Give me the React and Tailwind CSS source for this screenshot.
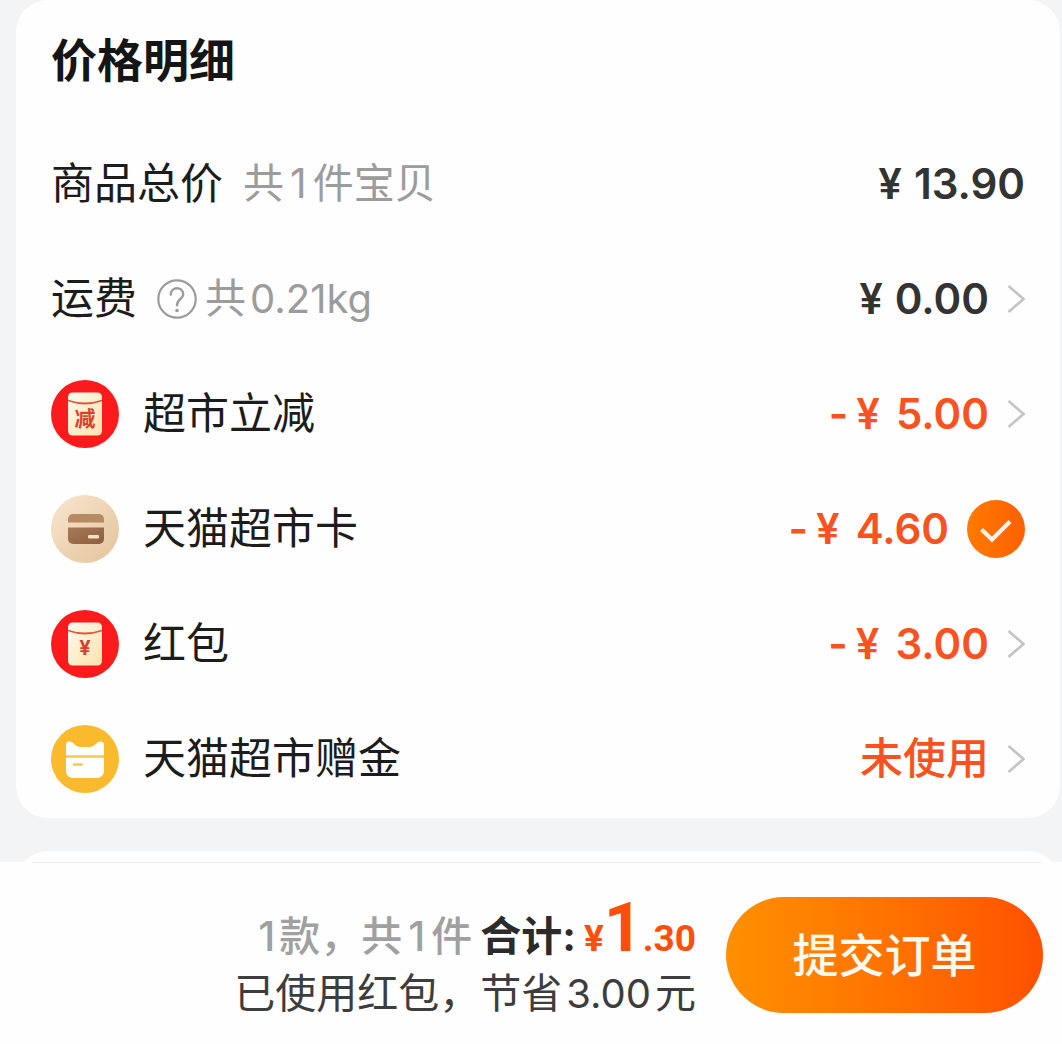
import { useState } from "react";

const EnvelopeIcon = ({ id, mark, markSize, markY }) => (
  <svg viewBox="0 0 68 68" className="size-[68px] shrink-0" aria-hidden="true">
    <defs>
      <linearGradient id={id} x1="0" y1="0" x2="1" y2="1">
        <stop offset="0" stopColor="#fffaf0" />
        <stop offset="1" stopColor="#fbe3ab" />
      </linearGradient>
    </defs>
    <circle cx="34" cy="34" r="34" fill="#fb1a1c" />
    <rect x="17" y="12.500" width="34" height="43" rx="4.500" fill={`url(#${id})`} />
    <path d="M17 20.500Q34 26.500 51 20.500" fill="none" stroke="#e2553a" strokeWidth="1.800" />
    <text
      x="34"
      y={markY}
      textAnchor="middle"
      fontSize={markSize}
      fontWeight="700"
      fill="#d8402a"
    >
      {mark}
    </text>
  </svg>
);

const CardIcon = () => (
  <svg viewBox="0 0 68 68" className="size-[68px] shrink-0" aria-hidden="true">
    <defs>
      <linearGradient id="card-bg" x1="0" y1="0" x2="1" y2="1">
        <stop offset="0" stopColor="#f9e6cf" />
        <stop offset="1" stopColor="#e3c39b" />
      </linearGradient>
      <linearGradient id="card-body" x1="0" y1="0" x2="1" y2="1">
        <stop offset="0" stopColor="#a97a58" />
        <stop offset="1" stopColor="#8d5e3f" />
      </linearGradient>
    </defs>
    <circle cx="34" cy="34" r="34" fill="url(#card-bg)" />
    <path d="M17 27.500V24a5 5 0 0 1 5-5h26a5 5 0 0 1 5 5v3.500z" fill="#b58a65" />
    <path d="M17 32.500h36V44a5 5 0 0 1-5 5H22a5 5 0 0 1-5-5z" fill="url(#card-body)" />
    <rect x="37" y="40" width="11" height="3.500" rx="1" fill="#f6e0c4" />
  </svg>
);

const CatIcon = () => (
  <svg viewBox="0 0 68 68" className="size-[68px] shrink-0" aria-hidden="true">
    <circle cx="34" cy="34" r="34" fill="#f9bb2d" />
    <path
      d="M15 20C15 16 19 15.500 22 18C25 20.800 26.500 22 30 22H38C41.500 22 43 20.800 46 18C49 15.500 53 16 53 20V46a7 7 0 0 1-7 7H22a7 7 0 0 1-7-7z"
      fill="#fff"
    />
    <path d="M15 31.500H53" stroke="#f9c650" strokeWidth="2.400" />
    <path d="M23 39.500H30.500" stroke="#f9c650" strokeWidth="2.600" strokeLinecap="round" />
  </svg>
);

const HelpIcon = () => (
  <svg viewBox="0 0 40 40" className="size-10" fill="none" stroke="#9b9b9b" aria-hidden="true">
    <circle cx="20" cy="20" r="18.700" strokeWidth="2.200" />
    <path
      d="M13.800 15.600C13.800 11.800 16.500 9.300 20 9.300S26.200 11.800 26.200 15.200C26.200 19.800 20 20 20 26.200"
      strokeWidth="2.400"
      strokeLinecap="round"
    />
    <circle cx="20" cy="31.500" r="1.800" fill="#9b9b9b" stroke="none" />
  </svg>
);

const Chevron = () => (
  <svg viewBox="0 0 18 30" className="h-[30px] w-[18px]" fill="none" aria-hidden="true">
    <path d="M1.500 2L16.500 15L1.500 28" stroke="#c4c4c4" strokeWidth="2.600" />
  </svg>
);

const Row = ({ icon, label, note, price, discount, children }) => (
  <li className="flex h-[115px] items-center justify-between">
    <div className="flex items-center">
      {icon && <span className="mr-6">{icon}</span>}
      <span className="text-[43px] text-[#1c1c1c]">{label}</span>
      {note}
    </div>
    <div className="flex items-center gap-[18px]">
      <span
        className={`flex items-center text-[42px] font-semibold ${
          discount ? "text-[#f8521f]" : "text-[#333333]"
        }`}
      >
        {discount && price && <span className="mr-2">-</span>}
        {price ? (
          <>
            <span className={discount ? "mr-4" : "mr-3"}>¥</span>
            <span>{price}</span>
          </>
        ) : (
          <span className="text-[43px] font-medium">未使用</span>
        )}
      </span>
      {children}
    </div>
  </li>
);

const ChevronButton = ({ label }) => (
  <button type="button" aria-label={label}>
    <Chevron />
  </button>
);

const App = () => {
  const [useCard, setUseCard] = useState(true);

  return (
    <div className="flex min-h-screen flex-col bg-[#f2f4f6] font-['Inter','Noto_Sans_CJK_SC',sans-serif]">
      <main>
        <section className="mr-0.5 ml-4 rounded-[32px] bg-[#fefefe] px-[35px] pb-0.5">
          <h2 className="pt-[33px] pb-[39px] text-[46px] leading-[54px] font-bold text-[#151515]">
            价格明细
          </h2>
          <ul>
            <Row
              label="商品总价"
              price="13.90"
              note={
                <span className="ml-5 text-[41px] text-[#9c9c9c]">
                  共<span className="mx-1.5">1</span>件宝贝
                </span>
              }
            />
            <Row
              label="运费"
              price="0.00"
              note={
                <>
                  <button type="button" aria-label="运费说明" className="ml-5">
                    <HelpIcon />
                  </button>
                  <span className="ml-2 text-[41px] text-[#9c9c9c]">
                    共<span className="ml-1 text-[40px]">0.21kg</span>
                  </span>
                </>
              }
            >
              <ChevronButton label="运费" />
            </Row>
            <Row
              icon={<EnvelopeIcon id="envelope-cut" mark="减" markSize="21" markY="46" />}
              label="超市立减"
              price="5.00"
              discount
            >
              <ChevronButton label="超市立减" />
            </Row>
            <Row icon={<CardIcon />} label="天猫超市卡" price="4.60" discount>
              <label className="relative block size-[58px]">
                <input
                  type="checkbox"
                  aria-label="使用天猫超市卡"
                  checked={useCard}
                  onChange={(e) => setUseCard(e.target.checked)}
                  className="block size-[58px] appearance-none rounded-full border-2 border-gray-300 checked:border-0 checked:bg-linear-to-r checked:from-[#ff7a00] checked:to-[#ff5f00]"
                />
                {useCard && (
                  <svg
                    viewBox="0 0 58 58"
                    className="pointer-events-none absolute inset-0"
                    fill="none"
                    aria-hidden="true"
                  >
                    <path d="M14.500 29.500L25 39.500L43 21.500" stroke="#fff3e6" strokeWidth="4.200" />
                  </svg>
                )}
              </label>
            </Row>
            <Row
              icon={<EnvelopeIcon id="envelope-red" mark="¥" markSize="20" markY="45" />}
              label="红包"
              price="3.00"
              discount
            >
              <ChevronButton label="红包" />
            </Row>
            <Row icon={<CatIcon />} label="天猫超市赠金" discount>
              <ChevronButton label="天猫超市赠金" />
            </Row>
          </ul>
        </section>

        {/* top edge of the next card, cut off by the footer */}
        <div className="mt-[33px] mr-0.5 ml-4 h-[11px] overflow-hidden">
          <div className="h-16 rounded-[32px] bg-[#fefefe]" />
        </div>
      </main>

      <footer className="flex-1 bg-[#fefefe]">
        <div className="mr-5 ml-8 h-px bg-[#eceef0]" />
        <div className="flex items-start justify-end pr-[19px]">
          <div className="mt-8 mr-[30px] text-right text-[41px] whitespace-nowrap">
            <p className="flex h-[68px] items-baseline justify-end leading-[66px]">
              <span className="font-medium text-[#a0a0a0]">
                1<span className="ml-1">款，共</span>
                <span className="mx-1.5">1</span>件
              </span>
              <span className="ml-2 font-bold text-[#2b2b2b]">合计:</span>
              <span className="ml-2 font-['Roboto',sans-serif] font-bold text-[#fc4f0c]">
                <span className="text-[37px]">¥</span>
                <span className="text-[68px]">1</span>
                <span className="text-[37px]">.30</span>
              </span>
            </p>
            <p className="leading-[60px] text-[#3d3d3d]">
              已使用红包，节省<span className="mx-1 text-[40px]">3.00</span>元
            </p>
          </div>
          <button
            type="button"
            className="mt-[34px] h-[116px] w-[317px] rounded-full bg-linear-to-r from-[#ff9000] to-[#ff5000] text-[46px] font-medium text-[#fffaf0]"
          >
            提交订单
          </button>
        </div>
      </footer>
    </div>
  );
};

export default App;
